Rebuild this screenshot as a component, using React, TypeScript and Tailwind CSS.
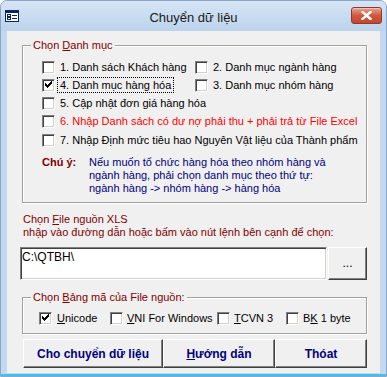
import React from 'react';

const Check: React.FC = () => (
  <svg width="9" height="9" viewBox="0 0 9 9" shapeRendering="crispEdges">
    <rect x="1" y="2" width="1" height="3" fill="#000" />
    <rect x="2" y="3" width="1" height="3" fill="#000" />
    <rect x="3" y="4" width="1" height="3" fill="#000" />
    <rect x="4" y="3" width="1" height="3" fill="#000" />
    <rect x="5" y="2" width="1" height="3" fill="#000" />
    <rect x="6" y="1" width="1" height="3" fill="#000" />
    <rect x="7" y="0" width="1" height="3" fill="#000" />
  </svg>
);

const Box: React.FC<{ checked?: boolean }> = ({ checked }) => (
  <span className="flex h-[13px] w-[13px] shrink-0 items-center justify-center border border-t-[#808080] border-l-[#808080] border-b-white border-r-white bg-white shadow-[inset_1px_1px_0_#404040,inset_-1px_-1px_0_#d4d0c8]">
    {checked && <Check />}
  </span>
);

const Row: React.FC<{ checked?: boolean; focused?: boolean; className?: string; children: React.ReactNode }> = ({
  checked,
  focused,
  className,
  children,
}) => (
  <div className={`flex items-center ${className ?? ''}`}>
    <Box checked={checked} />
    <span
      className={`ml-[2px] whitespace-nowrap border px-[2px] leading-[14px] ${
        focused ? 'border-dotted border-black' : 'border-transparent'
      }`}
    >
      {children}
    </span>
  </div>
);

const raised =
  'border border-t-white border-l-white border-b-[#404040] border-r-[#404040] shadow-[inset_-1px_-1px_0_#808080] bg-[#f0f0f0]';

const group =
  'relative ml-[15px] w-[345px] border border-[#a0a0a0] shadow-[inset_1px_1px_0_#fff,1px_1px_0_#fff]';

const App: React.FC = () => {
  return (
    <div className="h-[377px] w-[387px] overflow-hidden bg-white font-['Liberation_Sans',Arial,sans-serif] text-[11px] text-black">
      <div className="flex h-[377px] flex-col rounded-t-[7px] border border-[#8aa7c8] bg-[#c4d9ef]">
        {/* title bar */}
        <div className="relative flex h-[30px] shrink-0 items-center rounded-t-[6px] bg-gradient-to-b from-[#d6e5f5] to-[#bcd3ec]">
          <svg className="ml-[4px]" width="14" height="12" viewBox="0 0 14 12" shapeRendering="crispEdges">
            <rect x="0.5" y="0.5" width="13" height="11" fill="#fff" stroke="#0a246a" />
            <rect x="1" y="1" width="12" height="2" fill="#0a246a" />
            <rect x="2" y="4" width="3" height="2" fill="none" stroke="#0a246a" strokeWidth="1" />
            <rect x="2" y="7" width="3" height="2" fill="none" stroke="#0a246a" strokeWidth="1" />
            <rect x="7" y="5" width="5" height="1" fill="#0a246a" />
            <rect x="7" y="8" width="5" height="1" fill="#0a246a" />
          </svg>
          <span className="absolute left-0 right-0 top-[9px] text-center text-[13px] leading-[16px] text-[#1a1a1a]">
            Chuyển dữ liệu
          </span>
          <div className="absolute right-[4px] top-[6px] flex h-[17px] w-[31px] items-center justify-center rounded-[3px] border border-[#8e3a2a] bg-gradient-to-b from-[#e8a493] via-[#d0583f] to-[#c4452d] shadow-[inset_0_1px_0_#f3c3b6]">
            <svg width="11" height="9" viewBox="0 0 11 9">
              <path d="M1.5 1 L9.5 8 M9.5 1 L1.5 8" stroke="#fff" strokeWidth="2.4" strokeLinecap="square" />
            </svg>
          </div>
        </div>

        {/* body */}
        <div className="mx-[6px] flex h-[342px] shrink-0 flex-col bg-[#f0f0f0]">
          {/* Chọn Danh mục */}
          <div className={`${group} mt-[14px] h-[158px] pl-[19px] pt-[12px]`}>
            <span className="absolute left-[8px] top-[-8px] bg-[#f0f0f0] px-[2px] leading-[14px] text-[#800000]">
              Chọn <u>D</u>anh mục
            </span>
            <div className="flex h-[18px] items-center">
              <Row className="w-[153px]">1. Danh sách Khách hàng</Row>
              <Row>2. Danh mục ngành hàng</Row>
            </div>
            <div className="flex h-[18px] items-center">
              <Row className="w-[153px]" checked focused>
                4. Danh mục hàng hóa
              </Row>
              <Row>3. Danh mục nhóm hàng</Row>
            </div>
            <div className="flex h-[18px] items-center">
              <Row>5. Cập nhật đơn giá hàng hóa</Row>
            </div>
            <div className="flex h-[18px] items-center">
              <Row>
                <span className="text-[#ff0000]">6. Nhập Danh sách có dư nợ phải thu + phải trả từ File Excel</span>
              </Row>
            </div>
            <div className="mt-[1px] flex h-[18px] items-center">
              <Row>7. Nhập Định mức tiêu hao Nguyên Vật liệu của Thành phẩm</Row>
            </div>
            <div className="mt-[7px] flex leading-[13px]">
              <span className="w-[47px] shrink-0 font-bold text-[#800000]">Chú ý:</span>
              <span className="text-[#000080]">
                Nếu muốn tổ chức hàng hóa theo nhóm hàng và
                <br />
                ngành hàng, phải chọn danh mục theo thứ tự:
                <br />
                ngành hàng -&gt; nhóm hàng -&gt; hàng hóa
              </span>
            </div>
          </div>

          {/* Chọn File nguồn */}
          <div className="ml-[16px] mt-[10px] leading-[13px] text-[#800000]">
            Chọn <u>F</u>ile nguồn XLS
            <br />
            nhập vào đường dẫn hoặc bấm vào nút lệnh bên cạnh để chọn:
          </div>
          <div className="ml-[13px] mt-[8px] flex gap-[1px]">
            <div className="h-[33px] w-[307px] border border-t-[#808080] border-l-[#808080] border-b-white border-r-white bg-white pl-[1px] pt-[2px] text-[12px] leading-[14px] shadow-[inset_1px_1px_0_#404040,inset_-1px_-1px_0_#d4d0c8]">
              C:\QTBH\
            </div>
            <div className={`${raised} flex h-[33px] w-[39px] items-center justify-center pb-[2px] text-[12px]`}>...</div>
          </div>

          {/* Chọn Bảng mã */}
          <div className={`${group} mt-[17px] flex h-[37px] items-center pl-[16px] pt-[5px]`}>
            <span className="absolute left-[8px] top-[-8px] bg-[#f0f0f0] px-[2px] leading-[14px] text-[#800000]">
              Chọn <u>B</u>ảng mã của File nguồn:
            </span>
            <div className="flex w-[71px] items-center gap-[5px]">
              <Box checked />
              <span>
                <u>U</u>nicode
              </span>
            </div>
            <div className="flex w-[107px] items-center gap-[4px]">
              <Box />
              <span className="whitespace-nowrap">
                <u>V</u>NI For Windows
              </span>
            </div>
            <div className="flex w-[69px] items-center gap-[4px]">
              <Box />
              <span className="whitespace-nowrap">
                <u>T</u>CVN 3
              </span>
            </div>
            <div className="flex items-center gap-[4px]">
              <Box />
              <span className="whitespace-nowrap">
                B<u>K</u> 1 byte
              </span>
            </div>
          </div>

          {/* buttons */}
          <div className="ml-[16px] mt-[5px] flex text-[12px] font-bold text-[#000080]">
            <div className={`${raised} flex h-[29px] w-[140px] items-center justify-center`}>Cho chuyển dữ liệu</div>
            <div className={`${raised} flex h-[29px] w-[112px] items-center justify-center`}>
              <span>
                <u>H</u>ướng dẫn
              </span>
            </div>
            <div className={`${raised} flex h-[29px] w-[92px] items-center justify-center`}>Thóat</div>
          </div>
        </div>
        <div className="h-[1px] shrink-0" />
        <div className="h-[2px] shrink-0 bg-[#3ec2ee]" />
      </div>
    </div>
  );
};

export default App;
